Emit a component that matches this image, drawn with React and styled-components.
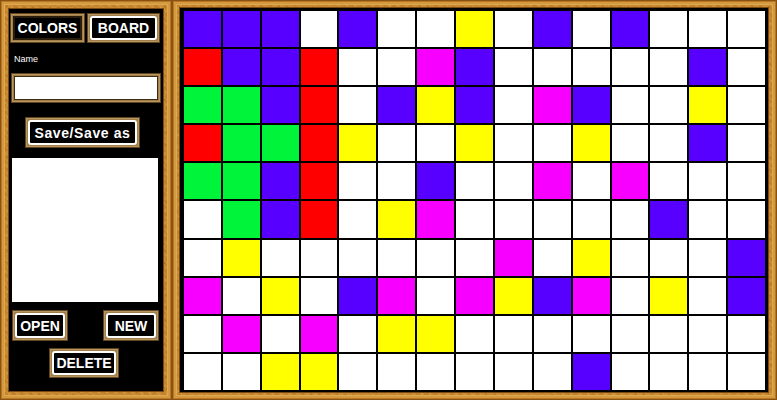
import React from "react";
import styled, { createGlobalStyle } from "styled-components";

const Global = createGlobalStyle`
  html, body { margin: 0; padding: 0; background: #000; }
  body { font-family: "Liberation Sans", Arial, sans-serif; }
  * { box-sizing: border-box; }
`;

const COLORS = {
  P: "#5800ff",
  R: "#ff0000",
  G: "#00f53a",
  Y: "#ffff00",
  M: "#f800ff",
  W: "#ffffff",
};

const BOARD = [
  "PPPWPWWYWPWPWWW",
  "RPPRWWMPWWWWWPW",
  "GGPRWPYPWMPWWYW",
  "RGGRYWWYWWYWWPW",
  "GGPRWWPWWMWMWWW",
  "WGPRWYMWWWWWPWW",
  "WYWWWWWWMWYWWWP",
  "MWYWPMWMYPMWYWP",
  "WMWMWYYWWWWWWWW",
  "WWYYWWWWWWPWWWW",
];

const Page = styled.div`
  display: flex;
  width: 777px;
  height: 400px;
  overflow: hidden;
`;

const nail = (x, y) =>
  `radial-gradient(circle at ${x} ${y}, #3b1a04 0 1.5px, rgba(59,26,4,0.5) 2.1px, transparent 2.7px)`;

const Frame = styled.div`
  width: ${(p) => p.$w}px;
  height: 400px;
  padding: ${(p) => p.$pad};
  display: flex;
  background:
    ${nail("3px", "3px")},
    ${nail("calc(100% - 3px)", "3px")},
    ${nail("3px", "calc(100% - 3px)")},
    ${nail("calc(100% - 3px)", "calc(100% - 3px)")},
    repeating-linear-gradient(37deg, rgba(255, 220, 140, 0.12) 0 1px, transparent 1px 3px, rgba(110, 55, 0, 0.1) 3px 4px, transparent 4px 5px),
    repeating-linear-gradient(-53deg, rgba(255, 220, 140, 0.1) 0 1px, transparent 1px 4px, rgba(110, 55, 0, 0.1) 4px 5px, transparent 5px 7px),
    #c8872f;
  box-shadow:
    inset 0 0 0 1px #8a5212,
    inset 0 0 0 2px #b97620,
    inset 0 0 0 4px #d49a42,
    inset 0 0 0 5px #dca94f;
`;

const Panel = styled.div`
  flex: 1;
  background: #000;
  box-shadow: 0 0 0 1px #7a4a12;
  display: flex;
  flex-direction: column;
  align-items: flex-start;
`;

const TabRow = styled.div`
  display: flex;
  gap: 2px;
  margin: 4px 0 0 1px;
`;

const Btn = styled.button`
  width: ${(p) => p.$w}px;
  height: ${(p) => p.$h}px;
  margin: ${(p) => p.$m || "0"};
  padding: 3px;
  border: none;
  background: #a17f4a;
  box-shadow: inset 0 0 0 1px #5e4420, inset 0 0 0 2px #b8955c;
  display: flex;
  cursor: pointer;
`;

const Face = styled.span`
  flex: 1;
  display: flex;
  align-items: center;
  justify-content: center;
  background: #000;
  border: 2px solid ${(p) => (p.$on ? "#ffffff" : "#2a1d0c")};
  border-radius: ${(p) => (p.$on ? "3px" : "0")};
  color: #fff;
  font-family: "Liberation Sans", Arial, sans-serif;
  font-weight: 700;
  font-size: ${(p) => p.$fs || 14}px;
  letter-spacing: ${(p) => p.$ls || 0}px;
  line-height: 1;
`;

const Label = styled.div`
  margin: 10px 0 0 5px;
  height: 12px;
  color: #fff;
  font-family: "Liberation Sans", Arial, sans-serif;
  font-size: 9px;
  line-height: 12px;
`;

const Field = styled.div`
  width: 150px;
  height: 30px;
  margin: 8px 0 0 2px;
  padding: 3px;
  background: #a17f4a;
  box-shadow: inset 0 0 0 1px #5e4420, inset 0 0 0 2px #b8955c;
  display: flex;
`;

const Input = styled.input`
  flex: 1;
  min-width: 0;
  border: 1px solid #3a2a10;
  background: #fff;
  outline: none;
  padding: 0 4px;
  font-family: "Liberation Sans", Arial, sans-serif;
  font-size: 12px;
`;

const List = styled.div`
  width: 146px;
  height: 144px;
  margin: 10px 0 0 3px;
  background: #fff;
`;

const ButtonRow = styled.div`
  width: 100%;
  display: flex;
  justify-content: space-between;
  padding: 0 4px 0 3px;
  margin-top: 8px;
`;

const Well = styled.div`
  flex: 1;
  background: #000;
  box-shadow: 0 0 0 1px #7a4a12;
  padding: 3px 3px 2px 4px;
  display: flex;
`;

const Grid = styled.div`
  flex: 1;
  display: grid;
  grid-template-columns: repeat(15, 1fr);
  grid-template-rows: repeat(10, 1fr);
  gap: 2px;
`;

const Cell = styled.div`
  background: ${(p) => COLORS[p.$c]};
`;

export default function App() {
  return (
    <>
      <Global />
      <Page>
        <Frame $w={172} $pad="9px">
          <Panel>
            <TabRow>
              <Btn $w={75} $h={30}>
                <Face $fs={14}>COLORS</Face>
              </Btn>
              <Btn $w={73} $h={30}>
                <Face $on $fs={14}>BOARD</Face>
              </Btn>
            </TabRow>
            <Label>Name</Label>
            <Field>
              <Input aria-label="Name" />
            </Field>
            <Btn $w={115} $h={31} $m="14px 0 0 16px">
              <Face $on $fs={14} $ls={0.6}>Save/Save as</Face>
            </Btn>
            <List />
            <ButtonRow>
              <Btn $w={56} $h={31}>
                <Face $on>OPEN</Face>
              </Btn>
              <Btn $w={56} $h={31}>
                <Face $on>NEW</Face>
              </Btn>
            </ButtonRow>
            <Btn $w={70} $h={30} $m="7px 0 0 40px">
              <Face $on>DELETE</Face>
            </Btn>
          </Panel>
        </Frame>
        <Frame $w={605} $pad="8px 9px 8px 8px">
          <Well>
            <Grid>
              {BOARD.flatMap((row, r) =>
                row.split("").map((c, i) => <Cell key={`${r}-${i}`} $c={c} />)
              )}
            </Grid>
          </Well>
        </Frame>
      </Page>
    </>
  );
}
